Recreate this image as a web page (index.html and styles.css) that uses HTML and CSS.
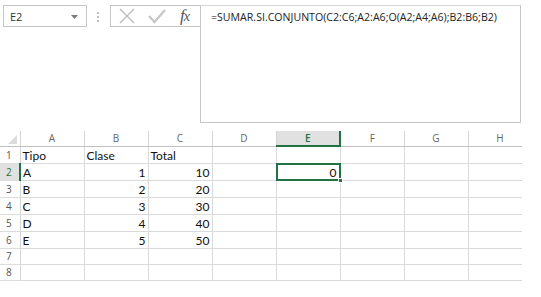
FILE: index.html
```html
<!DOCTYPE html>
<html lang="es">
<head>
<meta charset="UTF-8">
<title>SUMAR.SI.CONJUNTO</title>
<link rel="stylesheet" href="styles.css">
</head>
<body>
  <div class="bar">
    <div class="left">
      <div class="namebox">
        <span>E2</span>
        <svg class="caret" width="7" height="4" viewBox="0 0 7 4"><path d="M0 0H7L3.5 4Z" fill="#7a7a7a"/></svg>
      </div>
      <div class="grip"></div>
      <div class="tools">
        <svg width="18" height="16" viewBox="0 0 18 16"><path d="M2 1L16 15M16 1L2 15" stroke="#bcbcbc" stroke-width="1.4" fill="none"/></svg>
        <svg width="18" height="16" viewBox="0 0 18 16"><path d="M1 8L6.5 14L17 2" stroke="#c6c6c6" stroke-width="2.2" fill="none"/></svg>
        <span class="fx">f<i>x</i></span>
      </div>
    </div>
    <div class="formula">=SUMAR.SI.CONJUNTO(C2:C6;A2:A6;O(A2;A4;A6);B2:B6;B2)</div>
  </div>

  <div class="sheet">
    <table>
      <colgroup>
        <col class="rh"><col><col><col><col><col><col><col><col>
      </colgroup>
      <tr class="head">
        <th class="corner"><span class="tri"></span></th>
        <th>A</th><th>B</th><th>C</th><th>D</th><th class="on">E</th><th>F</th><th>G</th><th>H</th>
      </tr>
      <tr><th>1</th><td>Tipo</td><td>Clase</td><td>Total</td><td></td><td></td><td></td><td></td><td></td></tr>
      <tr><th class="on">2</th><td>A</td><td class="n">1</td><td class="n">10</td><td></td><td class="n sel">0<span class="frame"></span><span class="handle"></span></td><td></td><td></td><td></td></tr>
      <tr><th>3</th><td>B</td><td class="n">2</td><td class="n">20</td><td></td><td></td><td></td><td></td><td></td></tr>
      <tr><th>4</th><td>C</td><td class="n">3</td><td class="n">30</td><td></td><td></td><td></td><td></td><td></td></tr>
      <tr><th>5</th><td>D</td><td class="n">4</td><td class="n">40</td><td></td><td></td><td></td><td></td><td></td></tr>
      <tr><th>6</th><td>E</td><td class="n">5</td><td class="n">50</td><td></td><td></td><td></td><td></td><td></td></tr>
      <tr><th>7</th><td></td><td></td><td></td><td></td><td></td><td></td><td></td><td></td></tr>
      <tr><th>8</th><td></td><td></td><td></td><td></td><td></td><td></td><td></td><td></td></tr>
    </table>
  </div>
</body>
</html>
```

FILE: styles.css
```css
* { margin:0; padding:0; box-sizing:border-box; }
body { background:#fff; font-family:"Open Sans", "DejaVu Sans", sans-serif; color:#222; width:541px; height:297px; overflow:hidden; }

.bar { display:flex; height:123px; padding-top:5px; }
.left { display:flex; align-items:flex-start; width:200px; }
.namebox { width:84px; height:22px; margin-left:3px; border:1px solid #c6c6c6; display:flex; align-items:center; justify-content:space-between; padding:0 8px 0 6px; font-size:11px; color:#333; }
.caret { margin-top:1px; }
.grip { width:2px; height:10px; margin:7px 11px 0 10px; border-left:2px dotted #bdbdbd; }
.tools { flex:1; height:22px; border:1px solid #c6c6c6; border-right:none; display:flex; align-items:center; gap:12px; padding-left:7px; }
.fx { font-family:"Liberation Serif", serif; font-style:italic; font-size:17px; color:#555; letter-spacing:-1px; margin-left:2px; }
.fx i { font-size:14px; }
.formula { width:321px; height:118px; border:1px solid #c6c6c6; border-top-color:#d6d6d6; padding:4px 10px; font-size:10.6px; color:#222; white-space:nowrap; }

.sheet { margin-top:8px; width:522px; overflow:hidden; }
table { border-collapse:collapse; table-layout:fixed; width:532px; font-family:Lato, "Liberation Sans", sans-serif; font-size:12px; }
col { width:64px; }
col.rh { width:20px; }
th { font-family:"Open Sans", sans-serif; font-weight:normal; font-size:10px; color:#555; border-right:1px solid #d4d4d4; border-bottom:1px solid #dcdcdc; text-align:left; padding-left:6px; height:16px; }
.head th { text-align:center; padding:0; height:15px; border-bottom-color:#c0c0c0; color:#666; }
.head th.on { background:#e1e1e1; color:#217346; font-weight:600; border-bottom:2px solid #217346; }
th.on { background:#e1e1e1; color:#217346; border-right:2px solid #217346; }
.corner { position:relative; }
.tri { position:absolute; right:3px; bottom:2px; width:0; height:0; border-left:9px solid transparent; border-bottom:9px solid #dcdcdc; }
td { height:16px; border-right:1px solid #dadada; border-bottom:1px solid #dadada; padding:1px 2px 0; white-space:nowrap; line-height:15px; color:#111; }
td.n { text-align:right; }
td.sel { position:relative; padding-right:3px; }
.frame { position:absolute; left:-1px; top:-1px; right:-1px; bottom:-1px; border:2px solid #217346; }
.handle { position:absolute; right:-3px; bottom:-3px; width:5px; height:5px; background:#217346; border:1px solid #fff; }
```
